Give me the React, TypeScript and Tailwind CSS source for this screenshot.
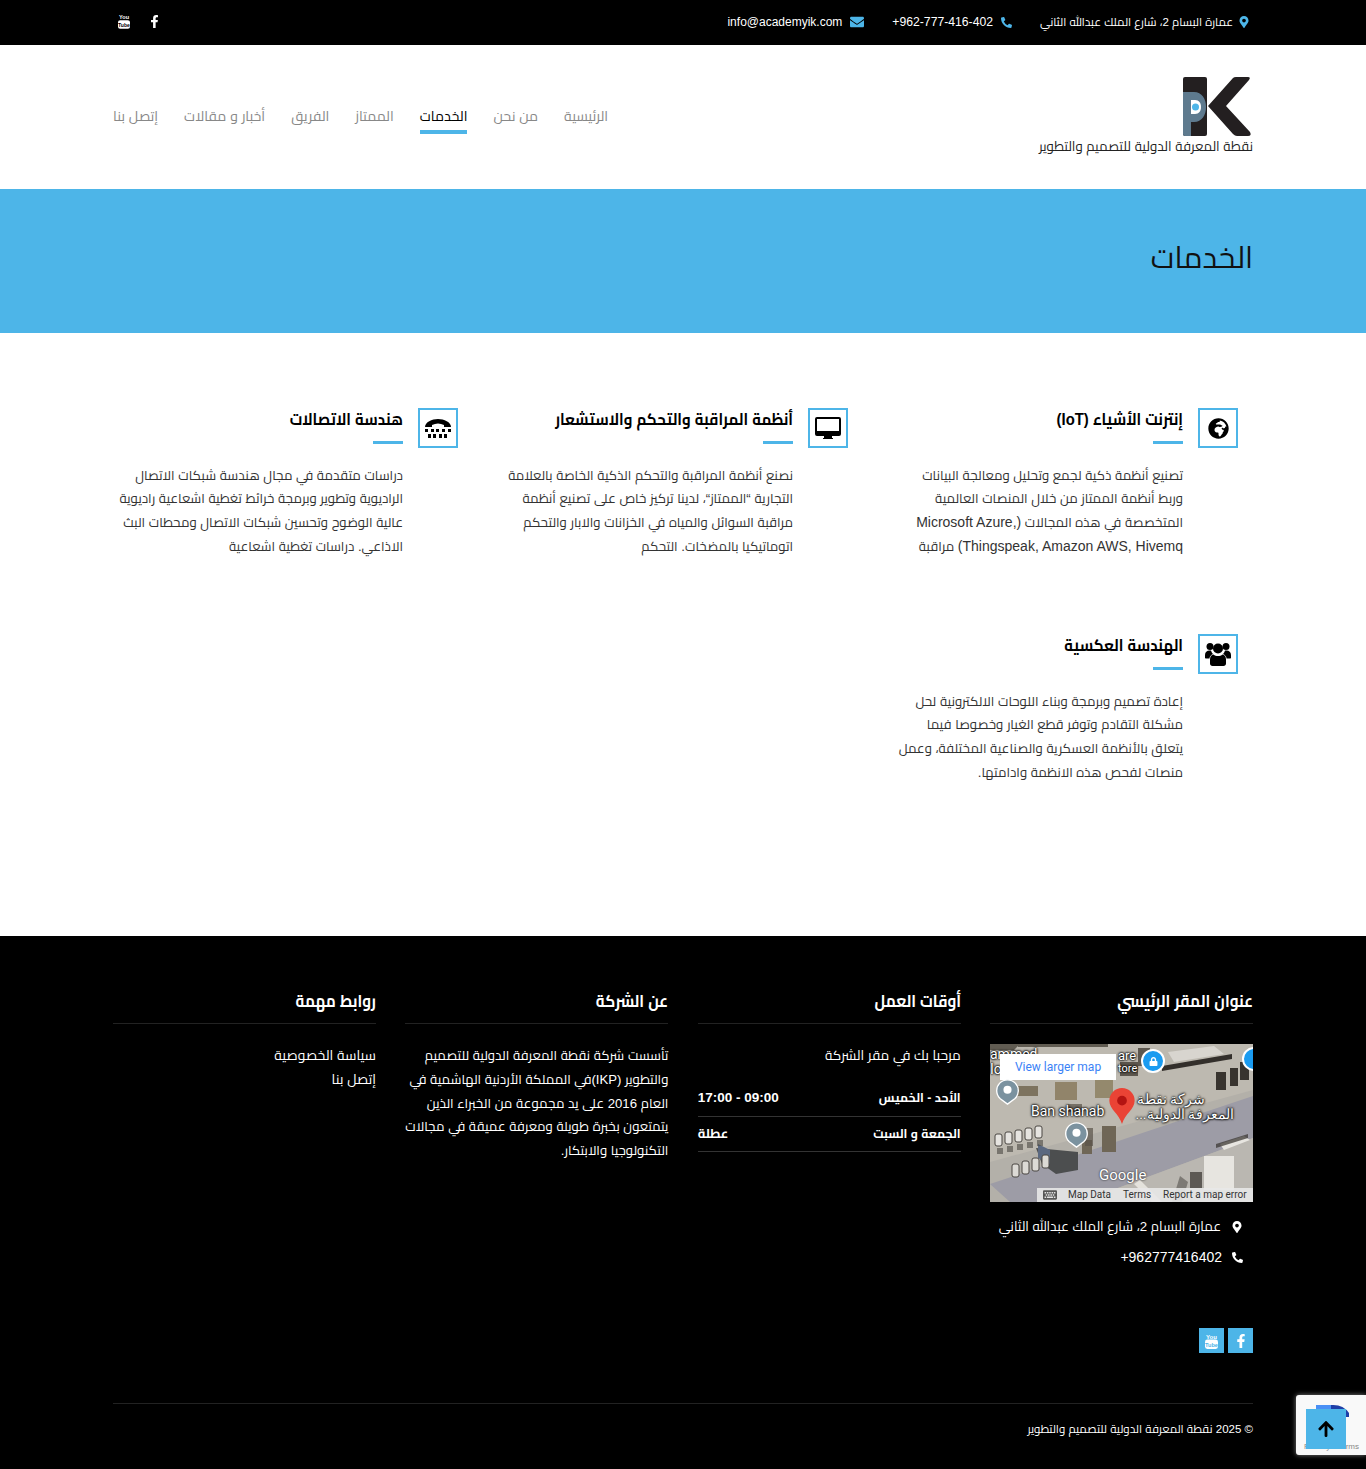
import { FaEnvelope, FaFacebookF, FaGlobeAfrica, FaMapMarkerAlt, FaPhoneAlt, FaArrowUp, FaKeyboard, FaLock } from 'react-icons/fa';

const arabicFont = "font-['Liberation_Sans','Cairo','DejaVu_Sans',sans-serif]";

function DesktopIcon() {
  return (
    <svg width="26" height="22" viewBox="0 0 26 22" fill="currentColor">
      <path fillRule="evenodd" d="M2 0h22a2 2 0 0 1 2 2v15a2 2 0 0 1-2 2H2a2 2 0 0 1-2-2V2a2 2 0 0 1 2-2zM2 2v12h22V2z" />
      <path d="M9 19h8v2h1v1H8v-1h1z" />
    </svg>
  );
}

function TtyIcon() {
  return (
    <svg width="26" height="19" viewBox="0 0 26 19" fill="currentColor">
      <path d="M0 8C0 3 7 0 13 0s13 3 13 8H19V6c-2-1-4-1.500-6-1.500S9 5 7 6v2z" />
      <path d="M0 10h3v3H0zM6 10h3v3H6zM11 10h3v3h-3zM17 10h3v3h-3zM23 10h3v3h-3zM3 15h3v4H3zM8 15h3v4H8zM14 15h3v4h-3zM19 15h3v4h-3z" />
    </svg>
  );
}

function UsersIcon() {
  return (
    <svg width="26" height="24" viewBox="0 0 26 24" fill="currentColor">
      <circle cx="5" cy="4.500" r="3.500" />
      <circle cx="21" cy="4.500" r="3.500" />
      <circle cx="13" cy="6.500" r="5" />
      <path d="M0 16v-3c0-3 2-4.500 4.500-4.500H6c.5 1.500 1 2.500 2 3.500-2 1-3.500 2.500-3.500 4.500H2a2 2 0 0 1-2-.500z" />
      <path d="M26 16v-3c0-3-2-4.500-4.500-4.500H20c-.5 1.500-1 2.500-2 3.500 2 1 3.500 2.500 3.500 4.500H24a2 2 0 0 0 2-.500z" />
      <path d="M8.500 12.500c1.200 1 2.800 1.500 4.500 1.500s3.300-.5 4.500-1.500c2 .5 3.500 2 3.500 5v4c0 1.500-1 2.500-2.500 2.500h-11C6 24 5 23 5 21.500v-4c0-3 1.500-4.500 3.500-5z" />
    </svg>
  );
}

function YoutubeIcon({ cut, className }: { cut: string; className?: string }) {
  return (
    <svg viewBox="0 0 14 17" fill="currentColor" className={className}>
      <text x="7" y="6" textAnchor="middle" fontSize="6.500" fontWeight="700" fontFamily="Liberation Sans, sans-serif">You</text>
      <rect x="0" y="7" width="14" height="10" rx="2.500" />
      <text x="7" y="14.500" textAnchor="middle" fontSize="6" fontWeight="700" fill={cut} fontFamily="Liberation Sans, sans-serif">Tube</text>
    </svg>
  );
}

const Latin = ({ children }: { children: string }) => <span className="text-[14px]">{children}</span>;

const services = [
  {
    icon: <FaGlobeAfrica className="text-[21px]" />,
    title: 'إنترنت الأشياء (IoT)',
    lines: [
      'تصنيع أنظمة ذكية لجمع وتحليل ومعالجة البيانات',
      'وربط أنظمة الممتاز من خلال المنصات العالمية',
      <>المتخصصة في هذه المجالات <Latin>(,Microsoft Azure</Latin></>,
      <><Latin>Thingspeak, Amazon AWS, Hivemq)</Latin> مراقبة</>,
    ],
  },
  {
    icon: <DesktopIcon />,
    title: 'أنظمة المراقبة والتحكم والاستشعار',
    lines: ['نصنع أنظمة المراقبة والتحكم الذكية الخاصة بالعلامة', 'التجارية “الممتاز“، لدينا تركيز خاص على تصنيع أنظمة', 'مراقبة السوائل والمياه في الخزانات والابار والتحكم', 'اتوماتيكيا بالمضخات. التحكم'],
  },
  {
    icon: <TtyIcon />,
    title: 'هندسة الاتصالات',
    lines: ['دراسات متقدمة في مجال هندسة شبكات الاتصال', 'الراديوية وتطوير وبرمجة خرائط تغطية اشعاعية راديوية', 'عالية الوضوح وتحسين شبكات الاتصال ومحطات البث', 'الاذاعي. دراسات تغطية اشعاعية'],
  },
  {
    icon: <UsersIcon />,
    title: 'الهندسة العكسية',
    lines: ['إعادة تصميم وبرمجة وبناء اللوحات الالكترونية لحل', 'مشكلة التقادم وتوفر قطع الغيار وخصوصا فيما', 'يتعلق بالأنظمة العسكرية والصناعية المختلفة، وعمل', 'منصات لفحص هذه الانظمة وادامتها.'],
  },
];

const navItems = ['الرئيسية', 'من نحن', 'الخدمات', 'الممتاز', 'الفريق', 'أخبار و مقالات', 'إتصل بنا'];

function Logo() {
  return (
    <svg width="70" height="60" viewBox="0 0 70 60" className="block">
      <path d="M2 0h20a2 2 0 0 1 2 2v55a2 2 0 0 1-2 2H2a2 2 0 0 1-2-2V2a2 2 0 0 1 2-2z" fill="#231f20" />
      <path d="M0 15h11c8 0 12 7 12 15s-4 15-12 15H8v14H2a2 2 0 0 1-2-2z" fill="#5e7a8e" />
      <path d="M8 23h4c4 0 6 3 6 7s-2 7-6 7H8z" fill="#fff" />
      <circle cx="12.500" cy="30" r="3.500" fill="#4db5e8" />
      <path d="M25 29 L50 1 Q51 0 53 0 H65 Q68 0 66 3 L43 29 L67 55 Q69 59 65 59 H54 Q52 59 50 57z" fill="#231f20" />
    </svg>
  );
}

function MapPin({ color, inner, className }: { color: string; inner: string; className: string }) {
  return (
    <svg viewBox="0 0 26 30" className={className}>
      <path d="M13 29 L5 23 A12 12 0 1 1 21 23z" fill={color} stroke="#fff" strokeWidth="1.500" />
      <circle cx="13" cy="13" r="4.500" fill={inner} />
    </svg>
  );
}

// static stand-in for the embedded satellite map
function MapEmbed() {
  const cars = [0, 1, 2, 3, 4];
  const halo = '[text-shadow:0_0_2px_#000,0_0_2px_#000,0_0_3px_#000]';
  return (
    <div className="relative h-[158px] w-full overflow-hidden bg-[#a9a8a5] font-['Roboto',sans-serif]" dir="ltr">
      <svg viewBox="0 0 263 158" className="absolute inset-0 h-full w-full">
        <rect width="263" height="158" fill="#b3b0a9" />
        <path d="M0 0h263v46L0 118z" fill="#bdb9b0" />
        <path d="M0 140 L263 52 V94 L90 158 H20z" fill="#9d9ca6" />
        <path d="M90 158 L263 94 V158z" fill="#bab7b1" />
        <path d="M0 0h30l-6 6H0zM28 0h90v3H28z" fill="#3a342b" opacity="0.7" />
        <rect x="65" y="38" width="22" height="18" fill="#91846a" />
        <rect x="105" y="36" width="18" height="18" fill="#94896d" />
        <rect x="22" y="42" width="26" height="10" fill="#7d735f" />
        <path d="M130 18h18v14h-18zM148 4h12v18h-12z" fill="#453f36" opacity="0.8" />
        <path d="M178 8l46-6 10 8-50 8z" fill="#d8d5cf" />
        <path d="M172 22l70-12v5l-70 12z" fill="#332f2b" />
        <path d="M226 28h10v18h-10zM240 24h8v18h-8zM250 18h9v18h-9z" fill="#38342f" />
        <path d="M112 82h14v26h-14zM92 96h10v14H92z" fill="#6f6656" />
        <path d="M46 104 L88 108 V126 L66 130 L52 120z" fill="#4c4e4f" />
        <path d="M48 100l12 6v14l-12-6z" fill="#5a6880" />
        {cars.map((n) => (
          <g key={n}>
            <rect x={5 + n * 10} y={90 - n * 2} width="7" height="12" rx="2" fill="#e6e4e0" stroke="#4a4743" strokeWidth="1" />
            <rect x={7 + n * 10} y={104 - n * 2} width="6" height="6" fill="#4a4743" opacity="0.6" />
            {n < 4 && <rect x={22 + n * 10} y={120 - n * 3} width="7" height="13" rx="2" fill="#dcdad5" stroke="#4a4743" strokeWidth="1" />}
          </g>
        ))}
        <path d="M95 84h8v18h-8zM78 60h14v8H78z" fill="#5a5349" opacity="0.7" />
        <path d="M230 100l24-8 6 4-26 10zM214 112h30v34h-30z" fill="#e7e5e0" />
        <path d="M226 100l32-10v4l-32 10zM200 128h12v16h-12z" fill="#3d3a36" opacity="0.75" />
        <path d="M150 136l22 22h-10l-18-18z" fill="#e4e2dc" />
        <path d="M190 132l-8 26h10l6-20z" fill="#55524c" opacity="0.6" />
      </svg>
      <span className={`absolute left-0 top-[3px] text-[14px] leading-none text-white ${halo}`}>ammed</span>
      <span className={`absolute left-0 top-[18px] text-[14px] leading-none text-white ${halo}`}>Io</span>
      <span className={`absolute left-[128px] top-[5px] text-[13px] leading-none text-white ${halo}`}>are</span>
      <span className={`absolute left-[128px] top-[19px] text-[11px] leading-none text-white ${halo}`}>tore</span>
      <div className="absolute left-[10px] top-[10px] flex h-[26px] w-[116px] items-center justify-center bg-white text-[12px] text-[#3b82f6]">View larger map</div>
      <div className="absolute left-[151px] top-[5px] flex h-[24px] w-[24px] items-center justify-center rounded-full border-2 border-white bg-[#1a9bf0] text-[9px] text-white"><FaLock /></div>
      <div className="absolute right-[-13px] top-[3px] h-[24px] w-[24px] rounded-full border-2 border-white bg-[#1a9bf0]" />
      <MapPin color="#7b929f" inner="#fff" className="absolute left-[5px] top-[34px] h-[27px] w-[25px]" />
      <MapPin color="#7b929f" inner="#fff" className="absolute left-[74px] top-[77px] h-[27px] w-[25px]" />
      <span className={`absolute left-[41px] top-[60px] text-[14px] leading-none text-white ${halo}`}>Ban shanab</span>
      <svg viewBox="0 0 26 38" className="absolute left-[119px] top-[44px] h-[37px] w-[26px]">
        <path d="M13 37 C10 26 0 22 0 13 A13 13 0 0 1 26 13 C26 22 16 26 13 37z" fill="#ea4335" />
        <circle cx="13" cy="13" r="5" fill="#b31412" />
      </svg>
      <span className={`absolute right-[48px] top-[48px] text-[14px] leading-none text-white ${halo}`} dir="rtl">شركة نقطة</span>
      <span className={`absolute right-[19px] top-[63px] text-[14px] leading-none text-white ${halo}`} dir="rtl">المعرفة الدولية...</span>
      <span className="absolute left-[109px] top-[124px] text-[15px] leading-none text-white [text-shadow:0_0_2px_#000]">Google</span>
      <div className="absolute bottom-0 right-0 flex h-[14px] w-[216px] items-center bg-[#e8e8e8]/90 text-[10px] leading-none text-[#333]">
        <div className="flex w-[25px] justify-center text-[14px] text-[#555]"><FaKeyboard /></div>
        <span className="ml-[6px]">Map Data</span>
        <span className="ml-[12px]">Terms</span>
        <span className="ml-[12px]">Report a map error</span>
      </div>
    </div>
  );
}

function FooterTitle({ children }: { children: string }) {
  return (
    <div className="border-b border-[#222] pb-[3px]">
      <h4 className="origin-right scale-x-[0.89] text-[17px] font-bold leading-[36px] text-white">{children}</h4>
    </div>
  );
}

export default function App() {
  return (
    <div dir="rtl" className={`min-h-[1469px] bg-white text-[14px] text-[#333] ${arabicFont}`}>
      <div className="h-[45px] bg-black text-white">
        <div className="mx-auto flex h-full w-[1170px] items-center justify-between pl-[20px] pr-[18px] text-[12px]">
          <div className="flex items-center gap-[28px]">
            <div className="flex items-center gap-[5px]"><FaMapMarkerAlt className="text-[12px] text-[#4db5e8]" /><span className="text-[11.500px]">عمارة البسام 2، شارع الملك عبدالله الثاني</span></div>
            <div className="flex items-center gap-[8px]"><FaPhoneAlt className="text-[11px] text-[#4db5e8]" /><span dir="ltr" className="text-[12.200px]">+962-777-416-402</span></div>
            <div className="flex items-center gap-[8px]"><FaEnvelope className="text-[14px] text-[#4db5e8]" /><span dir="ltr">info@academyik.com</span></div>
          </div>
          <div className="flex items-center gap-[18px] pb-[3px]">
            <FaFacebookF className="text-[13px]" />
            <YoutubeIcon cut="#000" className="h-[15px] w-[12px]" />
          </div>
        </div>
      </div>

      <header className="h-[144px] bg-white">
        <div className="mx-auto flex h-full w-[1170px] items-start justify-between px-[15px]">
          <div className="flex flex-col items-start pt-[32px]">
            <Logo />
            <div className="text-[13.300px] leading-[20px] text-[#222]">نقطة المعرفة الدولية للتصميم والتطوير</div>
          </div>
          <nav className="flex gap-[26px] pt-[59px]">
            {navItems.map((item) => (
              <a key={item} className={`pb-[2px] text-[14px] leading-[24px] ${item === 'الخدمات' ? 'border-b-4 border-[#4db5e8] text-black' : 'text-[#888]'}`}>{item}</a>
            ))}
          </nav>
        </div>
      </header>

      <section className="h-[144px] bg-[#4db5e8]">
        <div className="mx-auto flex h-full w-[1170px] items-center px-[15px] pb-[8px]">
          <h1 className="text-[30px] font-normal text-[#111]">الخدمات</h1>
        </div>
      </section>

      <section className="h-[603px] bg-white pt-[75px]">
        <div className="mx-auto grid w-[1170px] grid-cols-3 gap-y-[50px]">
          {services.map((service) => (
            <div key={service.title} className="flex h-[176px] gap-[15px] pr-[30px]">
              <div className="flex h-[40px] w-[40px] shrink-0 items-center justify-center border-2 border-[#4db5e8] text-black">{service.icon}</div>
              <div className="flex-1">
                <h3 className="origin-right scale-x-[0.9] text-[16.500px] font-bold leading-[22px] text-black">{service.title}</h3>
                <div className="mt-[11px] h-[3px] w-[30px] bg-[#4db5e8]" />
                <div className="mt-[19.500px] whitespace-nowrap text-[13.200px] leading-[23.800px] text-[#333]">
                  {service.lines.map((line, i) => <div key={i}>{line}</div>)}
                </div>
              </div>
            </div>
          ))}
        </div>
      </section>

      <footer className="relative h-[533px] bg-black text-white">
        <div className="mx-auto w-[1140px] pt-[48px]">
          <div className="grid grid-cols-[263px_263px_263px_263px] justify-between">
            <div>
              <FooterTitle>عنوان المقر الرئيسي</FooterTitle>
              <div className="mt-[20px]"><MapEmbed /></div>
              <div className="mt-[13px] flex items-center gap-[10px] pr-[10px] text-[13.250px] leading-[24px] whitespace-nowrap"><FaMapMarkerAlt className="text-[12px]" /><span>عمارة البسام 2، شارع الملك عبدالله الثاني</span></div>
              <div className="mt-[6px] flex items-center gap-[10px] pr-[10px] text-[14px] leading-[24px]"><FaPhoneAlt className="text-[11px]" /><span dir="ltr">+962777416402</span></div>
            </div>
            <div>
              <FooterTitle>أوقات العمل</FooterTitle>
              <p className="mt-[20px] text-[13.500px] leading-[24px]">مرحبا بك في مقر الشركة</p>
              <div className="mt-[13px] flex h-[36px] items-center justify-between border-b border-[#333] text-[12.200px] font-bold"><span>الأحد - الخميس</span><span dir="ltr" className="text-[13.500px]">17:00 - 09:00</span></div>
              <div className="flex h-[35px] items-center justify-between border-b border-[#333] text-[12.200px] font-bold"><span>الجمعة و السبت</span><span className="text-[13px]">عطلة</span></div>
            </div>
            <div>
              <FooterTitle>عن الشركة</FooterTitle>
              <div className="mt-[20px] whitespace-nowrap text-[13.200px] leading-[23.800px]">
                <div>تأسست شركة نقطة المعرفة الدولية للتصميم</div>
                <div>والتطوير (IKP)في المملكة الأردنية الهاشمية في</div>
                <div>العام 2016 على يد مجموعة من الخبراء الذين</div>
                <div>يتمتعون بخبرة طويلة ومعرفة عميقة في مجالات</div>
                <div>التكنولوجيا والابتكار.</div>
              </div>
            </div>
            <div>
              <FooterTitle>روابط مهمة</FooterTitle>
              <div className="mt-[20px] text-[13.800px] leading-[23.800px]">
                <div>سياسة الخصوصية</div>
                <div>إتصل بنا</div>
              </div>
            </div>
          </div>
          <div className="mt-[59px] flex gap-[4px]">
            <a className="flex h-[25px] w-[25px] items-center justify-center bg-[#4db5e8] text-[14px]"><FaFacebookF /></a>
            <a className="flex h-[25px] w-[25px] items-center justify-center bg-[#4db5e8]"><YoutubeIcon cut="#4db5e8" className="h-[16px] w-[13px]" /></a>
          </div>
          <div className="mt-[50px] border-t border-[#222] pt-[15px] text-[11.500px] leading-[20px]">© 2025 نقطة المعرفة الدولية للتصميم والتطوير</div>
        </div>

        <div className="absolute bottom-[14px] right-0 h-[60px] w-[70px] rounded-l-[3px] bg-[#f9f9f9] shadow-[0_0_5px_rgba(255,255,255,0.5)]">
          <svg viewBox="0 0 34 16" className="absolute left-[20px] top-[6px] h-[16px] w-[34px]">
            <path d="M0 4h15v12H0z" fill="#4a90f5" />
            <path d="M15 4q12-1 18 8v4H15z" fill="#1f3fa8" />
          </svg>
          <span className="absolute bottom-[4px] right-[7px] whitespace-nowrap text-[8px] leading-none text-[#888]" dir="ltr">Privacy - Terms</span>
        </div>
        <a className="absolute bottom-[20px] right-[20px] flex h-[40px] w-[40px] items-center justify-center bg-[#4db5e8] text-[18px] text-black"><FaArrowUp /></a>
      </footer>
    </div>
  );
}
